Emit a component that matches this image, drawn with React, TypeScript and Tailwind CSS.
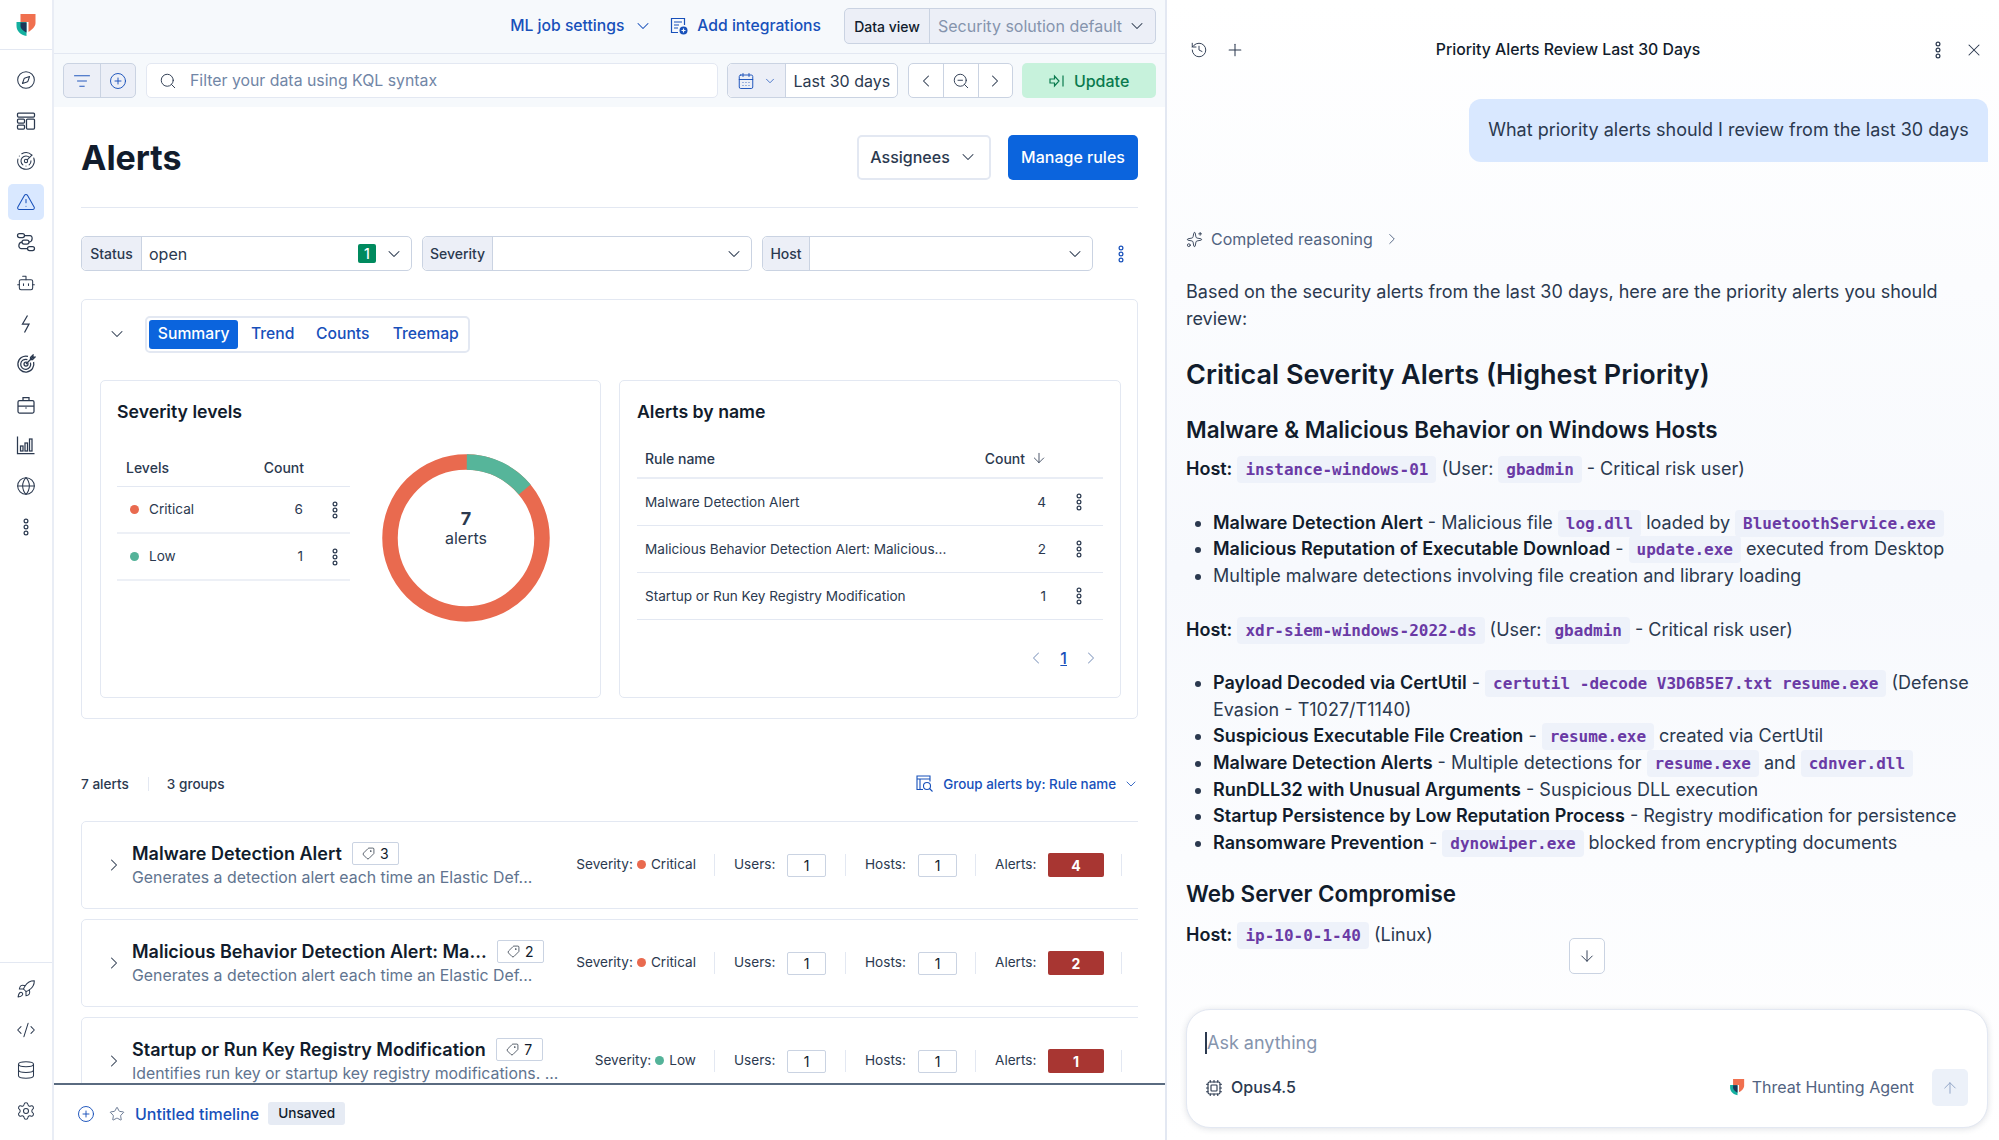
import type { ReactNode } from "react"
import {
  ArrowDown,
  ArrowUp,
  Bot,
  CalendarDays,
  ChevronDown,
  ChevronLeft,
  ChevronRight,
  CirclePlus,
  CodeXml,
  Compass,
  Cpu,
  Database,
  Globe,
  History,
  ListFilter,
  Plus,
  Radar,
  Rocket,
  Search,
  Settings,
  Sparkles,
  Star,
  Tag,
  TriangleAlert,
  X,
  ZoomOut,
} from "lucide-react"

function Dots({ className = "text-[#2b394f]" }: { className?: string }) {
  return (
    <svg width="6" height="18" viewBox="0 0 6 18" fill="none" stroke="currentColor" strokeWidth="1.2" className={className}>
      <circle cx="3" cy="3" r="1.9" />
      <circle cx="3" cy="9" r="1.9" />
      <circle cx="3" cy="15" r="1.9" />
    </svg>
  )
}

function Logo({ size = 24 }: { size?: number }) {
  return (
    <svg width={size} height={size} viewBox="0 0 20 23">
      <path d="M4 0H19V9C19 13 15 16 12 18V8H4Z" fill="#f0704f" />
      <path d="M0 8H10V22C4 21 0 17 0 12Z" fill="#14b0a0" />
      <path d="M4 8.6H10V18.5C7 17 4 15 4 12Z" fill="#1d3557" />
    </svg>
  )
}

function PanelsIcon() {
  return (
    <svg width="20" height="20" viewBox="0 0 20 20" fill="none" stroke="currentColor" strokeWidth="1.25">
      <rect x="1.5" y="2" width="17" height="4" rx="1" />
      <rect x="1.5" y="8" width="7" height="4" rx="1" />
      <rect x="1.5" y="14" width="7" height="4" rx="1" />
      <rect x="10.5" y="8" width="8" height="10" rx="1" />
    </svg>
  )
}

function FlowIcon() {
  return (
    <svg width="20" height="20" viewBox="0 0 20 20" fill="none" stroke="currentColor" strokeWidth="1.25">
      <rect x="1.5" y="1.5" width="7" height="4" rx="2" />
      <rect x="6" y="8" width="7" height="4" rx="2" />
      <rect x="11.5" y="14.5" width="7" height="4" rx="2" />
      <path d="M8.5 3.5H14C17 3.5 17 10 13 10M6 10C2 10 2 16.5 5 16.5H11.5" />
    </svg>
  )
}

function BoltIcon() {
  return (
    <svg width="20" height="20" viewBox="0 0 20 20" fill="none" stroke="currentColor" strokeWidth="1.25">
      <path d="M11.5 1.5L6.5 10H13L8.5 18.5" />
    </svg>
  )
}

function TargetIcon() {
  return (
    <svg width="20" height="20" viewBox="0 0 20 20" fill="none" stroke="currentColor" strokeWidth="1.25">
      <path d="M12 2.4A8 8 0 1 0 17.6 8" />
      <path d="M11.4 5.6A5 5 0 1 0 14.4 8.6" />
      <circle cx="10" cy="10" r="2" />
      <path d="M10 10L17 3M14.5 3.5L17 1V3H19L16.5 5.5H14.5Z" />
    </svg>
  )
}

function BarsIcon() {
  return (
    <svg width="20" height="20" viewBox="0 0 20 20" fill="none" stroke="currentColor" strokeWidth="1.25">
      <path d="M1.5 1.5V18.5H18.5" />
      <rect x="4.5" y="11" width="2.5" height="5" />
      <rect x="9" y="8" width="2.5" height="8" />
      <rect x="13.5" y="4" width="2.5" height="12" />
    </svg>
  )
}

function CaseIcon() {
  return (
    <svg width="20" height="20" viewBox="0 0 20 20" fill="none" stroke="currentColor" strokeWidth="1.25">
      <rect x="2" y="5.5" width="16" height="12.5" rx="1.5" />
      <path d="M7 5.5V2.5H13V5.5M2 11H18" />
      <path d="M10 12.6V13.6" strokeWidth="1.6" />
    </svg>
  )
}

function UpdateIcon() {
  return (
    <svg width="16" height="16" viewBox="0 0 16 16" fill="none" stroke="currentColor" strokeWidth="1.2">
      <path d="M1 6H5.5V3L10 8L5.5 13V10H1Z" />
      <path d="M14 2.5V13.5" />
    </svg>
  )
}

function IntegrationsIcon() {
  return (
    <svg width="18" height="18" viewBox="0 0 18 18" fill="none" stroke="currentColor" strokeWidth="1.2">
      <path d="M8 15.5H1.5V1.5H14.5V8" />
      <path d="M4 5H12M4 8H9M4 11H8" />
      <circle cx="13.5" cy="13.5" r="4" fill="currentColor" stroke="none" />
      <path d="M11.5 13.5H15.5M13.5 11.5V15.5" stroke="#f6f9fc" />
    </svg>
  )
}

function GroupIcon() {
  return (
    <svg width="17" height="17" viewBox="0 0 17 17" fill="none" stroke="currentColor" strokeWidth="1.1">
      <path d="M7 14.5H1V1H14V6.5" />
      <path d="M1 4H14M4 4V14" />
      <circle cx="11" cy="11" r="3.5" />
      <path d="M13.5 13.5L16.5 16.5" />
    </svg>
  )
}

const topNav = [
  <Compass size={20} strokeWidth={1.25} />,
  <PanelsIcon />,
  <Radar size={20} strokeWidth={1.25} />,
  <TriangleAlert size={20} strokeWidth={1.25} />,
  <FlowIcon />,
  <Bot size={20} strokeWidth={1.25} />,
  <BoltIcon />,
  <TargetIcon />,
  <CaseIcon />,
  <BarsIcon />,
  <Globe size={20} strokeWidth={1.25} />,
  <Dots className="text-[#2b394f]" />,
]

function Sidebar() {
  return (
    <aside className="w-[54px] shrink-0 flex flex-col items-stretch border-r-2 border-[#e9edf5] bg-white">
      <div className="h-[50px] flex items-center justify-center border-b border-[#e3e8f2] pt-[2px]">
        <Logo size={23} />
      </div>
      <nav className="pt-[12px] flex flex-col items-center gap-[4.6px] text-[#2b394f]">
        {topNav.map((icon, i) => (
          <div
            key={i}
            className={
              i === 3
                ? "w-[36px] h-[36px] flex items-center justify-center rounded-[5px] bg-[#d9e8ff] text-[#1750ba]"
                : "w-[36px] h-[36px] flex items-center justify-center"
            }
          >
            {icon}
          </div>
        ))}
      </nav>
      <div className="mt-auto h-[178px] border-t border-[#e3e8f2] pt-[8px] flex flex-col items-center gap-[4.6px] text-[#2b394f]">
        {[
          <Rocket size={20} strokeWidth={1.25} />,
          <CodeXml size={20} strokeWidth={1.25} />,
          <Database size={20} strokeWidth={1.25} />,
          <Settings size={20} strokeWidth={1.25} />,
        ].map((icon, i) => (
          <div key={i} className="w-[36px] h-[36px] flex items-center justify-center">
            {icon}
          </div>
        ))}
      </div>
    </aside>
  )
}

function TopBars() {
  return (
    <>
      <div className="h-[54px] shrink-0 flex items-center justify-end bg-[#f6f9fc] border-b border-[#e3e8f2] pr-[9px] pb-[1px] text-[#1750ba] text-[15.7px] font-medium">
        <span>ML job settings</span>
        <ChevronDown size={20} strokeWidth={1.25} className="ml-[9px] mr-[17px]" />
        <IntegrationsIcon />
        <span className="ml-[9px] mr-[23px]">Add integrations</span>
        <div className="w-[312px] h-[36px] flex border border-[#cad3e2] rounded-[5px] bg-[#eceff7]">
          <div className="w-[85px] flex items-center justify-center border-r border-[#cad3e2] text-[14px] font-medium text-[#111c2c]">
            Data view
          </div>
          <div className="flex-1 flex items-center justify-between pl-[8px] pr-[8px] text-[16px] text-[#8594ad] font-normal">
            <span>Security solution default</span>
            <ChevronDown size={20} strokeWidth={1.25} className="text-[#2b394f]" />
          </div>
        </div>
      </div>
      <div className="h-[53px] shrink-0 flex items-center bg-[#f6f9fc] pl-[9px] pr-[9px]">
        <div className="w-[73px] h-[35px] flex border border-[#cad3e2] rounded-[5px] bg-[#eceff7] text-[#1750ba]">
          <div className="w-[37px] flex items-center justify-center border-r border-[#cad3e2]">
            <ListFilter size={18} strokeWidth={1.25} />
          </div>
          <div className="flex-1 flex items-center justify-center">
            <CirclePlus size={18} strokeWidth={1.25} />
          </div>
        </div>
        <div className="ml-[10px] w-[573px] h-[35px] flex items-center bg-white border border-[#e3e8f2] rounded-[5px] pl-[12px] text-[15.85px] text-[#7186a6]">
          <Search size={18} strokeWidth={1.25} className="text-[#2b394f]" />
          <span className="ml-[13px]">Filter your data using KQL syntax</span>
        </div>
        <div className="ml-[9px] w-[171px] h-[35px] flex bg-white border border-[#cad3e2] rounded-[5px]">
          <div className="w-[58px] flex items-center justify-center gap-[8px] bg-[#eceff7] border-r border-[#cad3e2] rounded-l-[5px] text-[#1750ba]">
            <CalendarDays size={18} strokeWidth={1.25} />
            <ChevronDown size={14} strokeWidth={1.25} />
          </div>
          <div className="flex-1 flex items-center justify-center text-[16px] text-[#2b394f]">Last 30 days</div>
        </div>
        <div className="ml-[10px] w-[105px] h-[35px] flex bg-white border border-[#cad3e2] rounded-[5px] text-[#2b394f]">
          <div className="flex-1 flex items-center justify-center border-r border-[#cad3e2]">
            <ChevronLeft size={20} strokeWidth={1.25} />
          </div>
          <div className="flex-1 flex items-center justify-center border-r border-[#cad3e2]">
            <ZoomOut size={18} strokeWidth={1.25} />
          </div>
          <div className="flex-1 flex items-center justify-center">
            <ChevronRight size={20} strokeWidth={1.25} />
          </div>
        </div>
        <div className="ml-[9px] w-[134px] h-[35px] flex items-center justify-center gap-[9px] rounded-[5px] bg-[#c7f2dc] text-[#0a7a4e] text-[16px] font-medium">
          <UpdateIcon />
          <span>Update</span>
        </div>
      </div>
    </>
  )
}

function FilterControl({ label, labelW, width, value, badge }: { label: string; labelW: string; width: string; value?: string; badge?: boolean }) {
  return (
    <div className={`${width} h-[35px] flex border border-[#cad3e2] rounded-[5px] bg-white`}>
      <div className={`${labelW} flex items-center justify-center bg-[#eceff7] border-r border-[#cad3e2] rounded-l-[5px] text-[14px] font-medium text-[#2b394f]`}>
        {label}
      </div>
      <div className="flex-1 flex items-center pl-[7px] pr-[7px] text-[16px] text-[#2b394f]">
        <span>{value}</span>
        {badge && (
          <span className="ml-auto mr-[8px] w-[18px] h-[19px] flex items-center justify-center rounded-[2px] bg-[#008a5e] text-white text-[14px] font-medium">1</span>
        )}
        <ChevronDown size={20} strokeWidth={1.25} className={badge ? "" : "ml-auto"} />
      </div>
    </div>
  )
}

function SeverityCard() {
  const rows = [
    { name: "Critical", dot: "bg-[#e96a4f]", n: 6 },
    { name: "Low", dot: "bg-[#54b399]", n: 1 },
  ]
  return (
    <div className="w-[501px] h-[318px] border border-[#e3e8f2] rounded-[5px] pl-[16px] pt-[20px] flex flex-col">
      <h3 className="text-[17.7px] leading-[22px] font-semibold text-[#111c2c]">Severity levels</h3>
      <div className="mt-[30px] flex">
        <div className="w-[233px]">
          <div className="h-[34px] pb-[5px] flex items-center justify-between border-b border-[#e3e8f2] text-[14px] font-medium text-[#2b394f] pl-[9px] pr-[46px]">
            <span>Levels</span>
            <span>Count</span>
          </div>
          {rows.map((r) => (
            <div key={r.name} className="h-[47px] flex items-center border-b-2 border-[#edf0f6] pl-[13px] pr-[12px] text-[13.6px] text-[#2b394f]">
              <span className={`w-[9px] h-[9px] rounded-full ${r.dot}`} />
              <span className="ml-[10px]">{r.name}</span>
              <span className="ml-auto mr-[29px]">{r.n}</span>
              <Dots />
            </div>
          ))}
        </div>
        <div className="ml-[32px] relative w-[168px] h-[168px] mt-[1px]">
          <svg width="168" height="168" viewBox="0 0 168 168" fill="none" strokeWidth="15.5">
            <circle cx="84" cy="84" r="76" stroke="#e96a4f" />
            <path d="M84.8 8A76 76 0 0 1 142.7 35.5" stroke="#56b59a" />
          </svg>
          <div className="absolute inset-0 flex flex-col items-center justify-center text-[#2b394f] pb-[21px]">
            <span className="text-[18px] leading-[21px] font-bold">7</span>
            <span className="text-[16px] leading-[19px]">alerts</span>
          </div>
        </div>
      </div>
    </div>
  )
}

function AlertsByNameCard() {
  const rows = [
    ["Malware Detection Alert", 4],
    ["Malicious Behavior Detection Alert: Malicious...", 2],
    ["Startup or Run Key Registry Modification", 1],
  ]
  return (
    <div className="w-[502px] h-[318px] border border-[#e3e8f2] rounded-[5px] pl-[17px] pr-[17px] pt-[20px] flex flex-col">
      <h3 className="text-[17.7px] leading-[22px] font-semibold text-[#111c2c]">Alerts by name</h3>
      <div className="mt-[20px] h-[36px] pb-[4px] flex items-center border-b-2 border-[#e9edf5] pl-[8px] text-[14px] font-medium text-[#2b394f]">
        <span>Rule name</span>
        <span className="ml-auto">Count</span>
        <ArrowDown size={16} strokeWidth={1.25} className="ml-[6px] mr-[56px]" />
      </div>
      {rows.map(([name, n]) => (
        <div key={name} className="h-[47px] flex items-center border-b border-[#e3e8f2] pl-[8px] pr-[21px] text-[13.6px] text-[#2b394f]">
          <span>{name}</span>
          <span className="ml-auto mr-[30px]">{n}</span>
          <Dots />
        </div>
      ))}
      <div className="mt-[26px] flex items-center justify-end gap-[14px] pr-[2px] text-[#8ea2c4]">
        <ChevronLeft size={20} strokeWidth={1.25} />
        <span className="text-[16px] font-medium underline text-[#1750ba]">1</span>
        <ChevronRight size={20} strokeWidth={1.25} />
      </div>
    </div>
  )
}

function Sep({ className = "" }: { className?: string }) {
  return <span className={`w-px h-[22px] bg-[#e3e8f2] ${className}`} />
}

function Stat({ label, value, danger }: { label: string; value: number; danger?: boolean }) {
  return (
    <div className="flex items-center text-[14px] text-[#2b394f]">
      <span className="w-[53px] text-[13.6px] mb-[2px]">{label}</span>
      {danger ? (
        <span className="w-[56px] h-[24px] flex items-center justify-center rounded-[2px] bg-[#a83632] text-white font-bold">{value}</span>
      ) : (
        <span className="w-[39px] h-[23px] flex items-center justify-center border border-[#cad3e2] rounded-[2px] bg-white text-[#111c2c]">{value}</span>
      )}
    </div>
  )
}

function GroupRow({ title, desc, tag, sev, alerts, last }: { title: string; desc: string; tag: number; sev: string; alerts: number; last?: boolean }) {
  return (
    <div className={`w-[1078px] h-[88px] shrink-0 flex items-center border border-[#e3e8f2] rounded-[5px] ${last ? "" : "mb-[10px]"}`}>
      <ChevronRight size={20} strokeWidth={1.25} className="ml-[22px] text-[#2b394f]" />
      <div className="ml-[8px] flex-1 min-w-0">
        <div className="flex items-center">
          <span className="text-[18px] leading-[25px] font-semibold text-[#111c2c] truncate">{title}</span>
          <span className="ml-[10px] w-[47px] h-[23px] flex items-center justify-center gap-[5px] border border-[#cad3e2] rounded-[2px] text-[14px] text-[#111c2c]">
            <Tag size={13} strokeWidth={1.25} className="-scale-x-100" />
            {tag}
          </span>
        </div>
        <div className="text-[15.85px] leading-[24px] text-[#61748f] whitespace-nowrap">{desc}</div>
      </div>
      <div className="shrink-0 flex items-center gap-[19px] pr-[36px]">
        <div className="flex items-center text-[13.6px] text-[#2b394f] -mr-[1px] mb-[1px]">
          <span>Severity:</span>
          <span className={`ml-[4px] w-[9px] h-[9px] rounded-full ${sev === "Low" ? "bg-[#54b399]" : "bg-[#e96a4f]"}`} />
          <span className="ml-[5px]">{sev}</span>
        </div>
        <Sep />
        <Stat label="Users:" value={1} />
        <Sep />
        <Stat label="Hosts:" value={1} />
        <Sep className="-ml-[1px]" />
        <Stat label="Alerts:" value={alerts} danger />
        <Sep className="-ml-[2px]" />
      </div>
    </div>
  )
}

function AlertsPage() {
  return (
    <main className="w-[1113px] shrink-0 flex flex-col border-r-2 border-[#e3e8f2] bg-white h-full">
      <TopBars />
      <div className="flex-1 min-h-0 overflow-hidden px-[27px]">
        <div className="h-[101px] flex items-center border-b border-[#e3e8f2]">
          <h1 className="text-[34px] font-bold text-[#111c2c]">Alerts</h1>
          <div className="ml-auto w-[134px] h-[45px] flex items-center justify-center gap-[8px] border-2 border-[#e3e8f2] rounded-[5px] text-[16px] font-medium text-[#2b394f]">
            Assignees
            <ChevronDown size={20} strokeWidth={1.25} />
          </div>
          <div className="ml-[17px] w-[130px] h-[45px] flex items-center justify-center rounded-[5px] bg-[#0b64dd] text-white text-[16px] font-medium">
            Manage rules
          </div>
        </div>
        <div className="mt-[28px] flex items-center">
          <FilterControl label="Status" labelW="w-[60px]" width="w-[331px]" value="open" badge />
          <div className="w-[10px]" />
          <FilterControl label="Severity" labelW="w-[70px]" width="w-[330px]" />
          <div className="w-[10px]" />
          <FilterControl label="Host" labelW="w-[47px]" width="w-[331px]" />
          <Dots className="ml-[25px] text-[#1750ba]" />
        </div>
        <section className="mt-[28px] h-[420px] border border-[#e3e8f2] rounded-[5px] pl-[18px] pr-[16px]">
          <div className="h-[80px] flex items-center pb-[12px]">
            <ChevronDown size={20} strokeWidth={1.25} className="ml-[7px] text-[#2b394f]" />
            <div className="ml-[18px] w-[325px] h-[37px] flex items-center gap-[3px] border-2 border-[#e3e8f2] rounded-[5px] pl-[2px] text-[15.7px] font-medium text-[#1750ba]">
              <span className="w-[90px] h-[29px] flex items-center justify-center rounded-[3px] bg-[#0b64dd] text-white">Summary</span>
              <span className="w-[63px] text-center">Trend</span>
              <span className="w-[76px] -ml-[2px] text-center">Counts</span>
              <span className="w-[85px] text-center">Treemap</span>
            </div>
          </div>
          <div className="flex justify-between">
            <SeverityCard />
            <AlertsByNameCard />
          </div>
        </section>
        <div className="mt-[52px] h-[26px] flex items-center text-[13.6px] font-medium text-[#2b394f]">
          <span>7 alerts</span>
          <span className="ml-[19px] mr-[18px] w-px h-[14px] bg-[#e3e8f2]" />
          <span>3 groups</span>
          <span className="ml-auto flex items-center text-[#1750ba] text-[13.4px]">
            <GroupIcon />
            <span className="ml-[10px]">Group alerts by: Rule name</span>
            <ChevronDown size={16} strokeWidth={1.25} className="ml-[7px] -mr-[1px]" />
          </span>
        </div>
        <div className="mt-[24px] flex flex-col overflow-hidden h-[269px]">
          <GroupRow title="Malware Detection Alert" desc="Generates a detection alert each time an Elastic Def..." tag={3} sev="Critical" alerts={4} />
          <GroupRow title="Malicious Behavior Detection Alert: Ma..." desc="Generates a detection alert each time an Elastic Def..." tag={2} sev="Critical" alerts={2} />
          <GroupRow title="Startup or Run Key Registry Modification" desc="Identifies run key or startup key registry modifications. ..." tag={7} sev="Low" alerts={1} last />
        </div>
      </div>
      <div className="h-[57px] shrink-0 flex items-center border-t-2 border-[#5a6b80] bg-white pl-[23px] pt-[2px]">
        <CirclePlus size={18} strokeWidth={1.25} className="text-[#1750ba]" />
        <Star size={16} strokeWidth={1.25} className="ml-[14px] text-[#516381]" />
        <span className="ml-[10px] text-[16px] font-medium text-[#1750ba]">Untitled timeline</span>
        <span className="ml-[9px] h-[23px] px-[10px] flex items-center rounded-[3px] bg-[#e6ebf4] text-[13.6px] font-medium text-[#111c2c]">Unsaved</span>
      </div>
    </main>
  )
}

function Code({ children }: { children: ReactNode }) {
  return (
    <code className="mx-[5px] px-[8px] py-[4px] rounded-[4px] bg-[#eef2fa] text-[#6a3aa5] text-[16px] leading-none font-semibold font-['DejaVu_Sans_Mono',monospace]">
      {children}
    </code>
  )
}

function Li({ children }: { children: ReactNode }) {
  return <li className="ml-[27px]">{children}</li>
}

function B({ children }: { children: ReactNode }) {
  return <b className="font-semibold text-[#111c2c]">{children}</b>
}

function AssistantPanel() {
  return (
    <aside className="flex-1 min-w-0 h-full flex flex-col bg-gradient-to-b from-white via-[#f7f9fd] to-white text-[#2b394f] text-[18px] leading-[26.6px] overflow-hidden">
      <div className="h-[99px] shrink-0 pt-[1px] flex items-center pl-[23px] pr-[15px]">
        <History size={18} strokeWidth={1.25} />
        <Plus size={20} strokeWidth={1.25} className="ml-[17px]" />
        <span className="flex-1 text-center text-[15.8px] font-medium text-[#111c2c] pr-[44px]">Priority Alerts Review Last 30 Days</span>
        <Dots />
        <X size={20} strokeWidth={1.25} className="ml-[23px]" />
      </div>
      <div className="flex-1 min-h-0 pl-[19px] pr-[11px] relative">
        <div className="ml-auto w-[519px] h-[63px] flex items-center justify-center rounded-t-[12px] rounded-bl-[12px] bg-[#d9e8ff]">
          What priority alerts should I review from the last 30 days
        </div>
        <div className="mt-[64px] h-[26px] flex items-center text-[16px] text-[#516381]">
          <Sparkles size={17} strokeWidth={1.25} className="text-[#2b394f]" />
          <span className="ml-[8px]">Completed reasoning</span>
          <ChevronRight size={18} strokeWidth={1.25} className="ml-[10px]" />
        </div>
        <p className="mt-[27px] pr-[30px]">Based on the security alerts from the last 30 days, here are the priority alerts you should review:</p>
        <h2 className="mt-[25px] text-[27px] leading-[36px] font-semibold text-[#111c2c]">Critical Severity Alerts (Highest Priority)</h2>
        <h3 className="mt-[22px] text-[22.4px] leading-[30px] font-semibold text-[#111c2c]">Malware &amp; Malicious Behavior on Windows Hosts</h3>
        <p className="mt-[11px]">
          <B>Host:</B>
          <Code>instance-windows-01</Code>
          (User:
          <Code>gbadmin</Code>- Critical risk user)
        </p>
        <ul className="mt-[27px] list-disc">
          <Li><B>Malware Detection Alert</B> - Malicious file<Code>log.dll</Code>loaded by<Code>BluetoothService.exe</Code></Li>
          <Li><B>Malicious Reputation of Executable Download</B> -<Code>update.exe</Code>executed from Desktop</Li>
          <Li>Multiple malware detections involving file creation and library loading</Li>
        </ul>
        <p className="mt-[27px]">
          <B>Host:</B>
          <Code>xdr-siem-windows-2022-ds</Code>
          (User:
          <Code>gbadmin</Code>- Critical risk user)
        </p>
        <ul className="mt-[27px] list-disc">
          <Li><B>Payload Decoded via CertUtil</B> -<Code>certutil -decode V3D6B5E7.txt resume.exe</Code>(Defense Evasion - T1027/T1140)</Li>
          <Li><B>Suspicious Executable File Creation</B> -<Code>resume.exe</Code>created via CertUtil</Li>
          <Li><B>Malware Detection Alerts</B> - Multiple detections for<Code>resume.exe</Code>and<Code>cdnver.dll</Code></Li>
          <Li><B>RunDLL32 with Unusual Arguments</B> - Suspicious DLL execution</Li>
          <Li><B>Startup Persistence by Low Reputation Process</B> - Registry modification for persistence</Li>
          <Li><B>Ransomware Prevention</B> -<Code>dynowiper.exe</Code>blocked from encrypting documents</Li>
        </ul>
        <h3 className="mt-[23px] text-[22.4px] leading-[30px] font-semibold text-[#111c2c]">Web Server Compromise</h3>
        <p className="mt-[13px]">
          <B>Host:</B>
          <Code>ip-10-0-1-40</Code>
          (Linux)
        </p>
        <div className="absolute left-[402px] top-[839px] w-[36px] h-[36px] flex items-center justify-center rounded-[5px] border border-[#cad3e2] bg-white">
          <ArrowDown size={18} strokeWidth={1.25} />
        </div>
      </div>
      <div className="shrink-0 ml-[19px] mr-[11px] mb-[12px] h-[119px] rounded-[24px] border border-[#e3e8f2] shadow-[0_1px_6px_rgba(43,57,79,0.15)] bg-white pl-[18px] pr-[19px] pt-[19px] flex flex-col">
        <div className="h-[28px] flex items-center text-[18px] text-[#8594ad]">
          <span className="w-[2px] h-[22px] bg-[#2b394f]" />
          <span>Ask anything</span>
        </div>
        <div className="mt-[12px] flex items-center text-[16px]">
          <Cpu size={18} strokeWidth={1.5} />
          <span className="ml-[8px] font-medium text-[#2b394f]">Opus4.5</span>
          <span className="ml-auto"><Logo size={17} /></span>
          <span className="ml-[6px] text-[#516381]">Threat Hunting Agent</span>
          <span className="ml-[18px] w-[36px] h-[37px] flex items-center justify-center rounded-[5px] bg-[#ecf1f9] text-[#8ea2c4]">
            <ArrowUp size={18} strokeWidth={1.25} />
          </span>
        </div>
      </div>
    </aside>
  )
}

export default function App() {
  return (
    <div className="h-screen w-screen overflow-hidden flex font-['Inter',sans-serif] bg-white">
      <Sidebar />
      <AlertsPage />
      <AssistantPanel />
    </div>
  )
}
